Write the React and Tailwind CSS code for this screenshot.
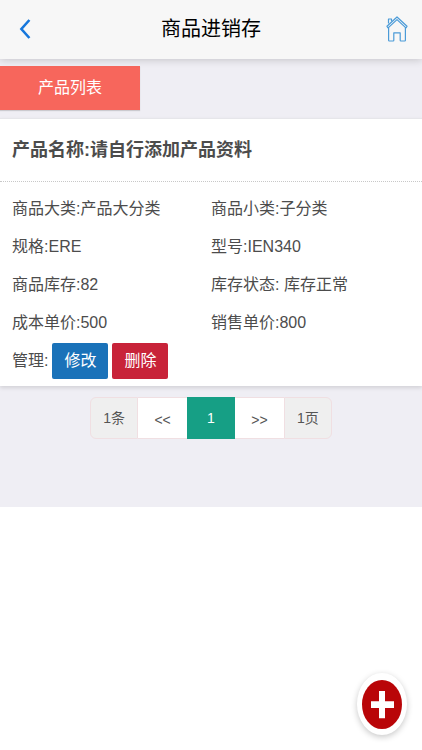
const product = {
  name: '请自行添加产品资料',
  fields: [
    ['商品大类:', '产品大分类'],
    ['商品小类:', '子分类'],
    ['规格:', 'ERE'],
    ['型号:', 'IEN340'],
    ['商品库存:', '82'],
    ['库存状态: ', '库存正常'],
    ['成本单价:', '500'],
    ['销售单价:', '800'],
  ],
};

function Header() {
  return (
    <header className="relative z-10 flex h-[59px] items-center justify-between bg-[#f7f7f7] px-[11px] pb-0.5 shadow-[0_1px_8px_rgba(0,0,0,0.18)]">
      <button type="button" aria-label="返回" className="flex h-10 w-7 items-center justify-center">
        <svg width="12" height="22" viewBox="0 0 12 22" fill="none" stroke="#1677dc" strokeWidth="2.6">
          <path d="M10.4 2 2.4 11l8 9" />
        </svg>
      </button>
      <h1 className="text-xl text-black">商品进销存</h1>
      <a href="#home" aria-label="首页" className="flex h-10 w-7 items-center justify-center">
        <svg width="22" height="26" viewBox="0 0 22 26" fill="none" stroke="#4b9bd8" strokeWidth="1.2" strokeLinejoin="round">
          <path d="M2.5 7.6V3h3v2.2" />
          <path d="M11 1 1 10.3l1.1 1.6L11 3.6l8.9 8.3 1.1-1.6z" />
          <path d="M2.6 11.5v12.7q0 .8.8.8h3.7q.7 0 .7-.8v-7.4h6.4v7.4q0 .8.7.8h3.7q.8 0 .8-.8V11.5" />
        </svg>
      </a>
    </header>
  );
}

function ProductCard() {
  return (
    <article className="border-t border-[#e6e6ea] bg-white text-[#4c4c4c] shadow-[0_2px_4px_rgba(0,0,0,0.12)]">
      <h2 className="border-b border-dotted border-[#c8c8c8] px-3 py-4 text-lg leading-[30px] font-bold">
        产品名称:{product.name}
      </h2>
      <div className="px-3 pt-2 pb-1.5">
        <dl className="grid grid-cols-2">
          {product.fields.map(([label, value]) => (
            <div key={label} className="flex h-[38px] items-center whitespace-pre">
              <dt>{label}</dt>
              <dd>{value}</dd>
            </div>
          ))}
        </dl>
        <div className="flex h-[38px] items-center gap-1">
          <span>管理:</span>
          <button type="button" className="h-9 w-14 rounded-xs bg-[#1a72b9] text-white">修改</button>
          <button type="button" className="h-9 w-14 rounded-xs bg-[#c82339] text-white">删除</button>
        </div>
      </div>
    </article>
  );
}

function Pagination() {
  return (
    <nav aria-label="分页" className="mx-auto mt-[11px] grid h-[42px] w-[242px] grid-cols-5 text-sm text-[#555]">
      <span className="flex items-center justify-center rounded-l-md border border-[#f0dfe2] bg-[#efefef]">1条</span>
      <button type="button" className="border-y border-[#f0dfe2] bg-white pt-1">&lt;&lt;</button>
      <button type="button" aria-current="page" className="bg-[#169f85] text-white">1</button>
      <button type="button" className="border-y border-[#f0dfe2] bg-white pt-1">&gt;&gt;</button>
      <span className="flex items-center justify-center rounded-r-md border border-[#f0dfe2] bg-[#efefef]">1页</span>
    </nav>
  );
}

export default function App() {
  return (
    <div className="min-h-screen bg-white font-['Liberation_Sans','Noto_Sans_CJK_SC',sans-serif] text-base">
      <Header />
      <main className="bg-[#efeef4] pb-[68px]">
        <div className="pt-[7px] pb-2">
          <button type="button" className="h-11 w-[140px] bg-[#f7665c] text-white shadow-[0_1px_1px_rgba(0,0,0,0.15)]">
            产品列表
          </button>
        </div>
        <ProductCard />
        <Pagination />
      </main>
      <button
        type="button"
        aria-label="添加"
        className="fixed right-[15px] bottom-[15px] flex h-[62px] w-[50px] items-center justify-center rounded-[50%] bg-white shadow-[0_2px_6px_rgba(0,0,0,0.22)]"
      >
        <svg width="40" height="49" viewBox="0 0 40 49">
          <ellipse cx="20" cy="24.5" rx="20" ry="24.5" fill="#b90508" />
          <path d="M17 11h6v10.3h9v6.7h-9v10.3h-6V28H9v-6.7h8z" fill="#fff" />
        </svg>
      </button>
    </div>
  );
}
